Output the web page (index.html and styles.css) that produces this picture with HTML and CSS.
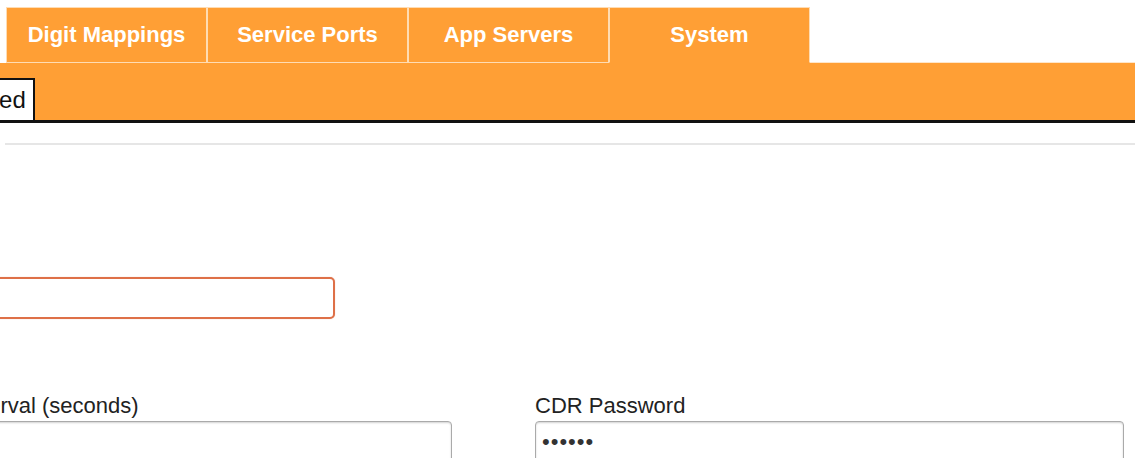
FILE: index.html
```html
<!DOCTYPE html>
<html lang="en">
<head>
<meta charset="utf-8">
<title>System Settings</title>
<link rel="stylesheet" href="styles.css">
</head>
<body>
  <nav class="tabs">
    <a class="tab">Digit Mappings</a>
    <a class="tab">Service Ports</a>
    <a class="tab">App Servers</a>
    <a class="tab tab-active">System</a>
    <span class="tab-fill"></span>
  </nav>
  <div class="subbar">
    <span class="subtab">Advanced</span>
  </div>
  <hr class="rule">
  <form class="form">
    <div class="field field-first">
      <input class="text-input text-input-invalid" type="text">
    </div>
    <div class="field">
      <label class="label">Heartbeat Interval (seconds)</label>
      <input class="text-input" type="text">
    </div>
    <div class="field">
      <label class="label">CDR Password</label>
      <input class="text-input password" type="password" value="secret">
    </div>
  </form>
</body>
</html>
```

FILE: styles.css
```css
html, body {
  margin: 0;
  padding: 0;
  background: #ffffff;
  overflow: hidden;
}

body {
  font-family: "Liberation Sans", Arial, sans-serif;
  color: #222;
}

/* top tab strip */
.tabs {
  display: flex;
  margin-top: 7px;
  padding-left: 6px;
}

.tab {
  box-sizing: border-box;
  width: 201px;
  height: 56px;
  border: 1px solid #ffdcb3;
  background: #ff9f35;
  color: #ffffff;
  font-weight: bold;
  font-size: 22px;
  line-height: 54px;
  text-align: center;
  text-decoration: none;
}

.tab-active {
  border-bottom-color: #ff9f35;
}

.tab-fill {
  flex: 1;
  border-bottom: 1px solid #ffe6c9;
}

/* secondary bar under the tabs */
.subbar {
  display: flex;
  align-items: flex-end;
  height: 57px;
  background: #ff9f35;
  border-bottom: 3px solid #111;
}

.subtab {
  box-sizing: border-box;
  height: 42px;
  margin-left: -91px;
  padding: 0 7px 0 8px;
  background: #ffffff;
  border: 2px solid #111;
  border-bottom: 0;
  color: #111;
  font-size: 24px;
  line-height: 40px;
}

.rule {
  border: 0;
  height: 2px;
  background: #e6e6e6;
  margin: 20px 0 0 5px;
}

/* settings form */
.form {
  display: grid;
  grid-template-columns: 591px 589px;
  column-gap: 83px;
  row-gap: 75px;
  margin: 132px 0 0 -139px;
}

.field-first {
  grid-column: 1 / 3;
}

.label {
  display: block;
  font-size: 22px;
  line-height: 24px;
  margin-bottom: 3px;
  color: #222;
}

.text-input {
  display: block;
  box-sizing: border-box;
  width: 100%;
  height: 42px;
  padding: 0 6px;
  border: 1px solid #aaaaaa;
  border-radius: 4px;
  box-shadow: inset 0 1px 2px rgba(0, 0, 0, 0.18);
  font-family: "Liberation Sans", Arial, sans-serif;
  font-size: 22px;
  color: #333;
  background: #ffffff;
  outline: none;
}

.text-input-invalid {
  width: 474px;
  border: 2px solid #de7048;
  border-radius: 5px;
  box-shadow: 0 0 1px rgba(222, 112, 72, 0.5);
}

.password {
  letter-spacing: 1px;
}
```
